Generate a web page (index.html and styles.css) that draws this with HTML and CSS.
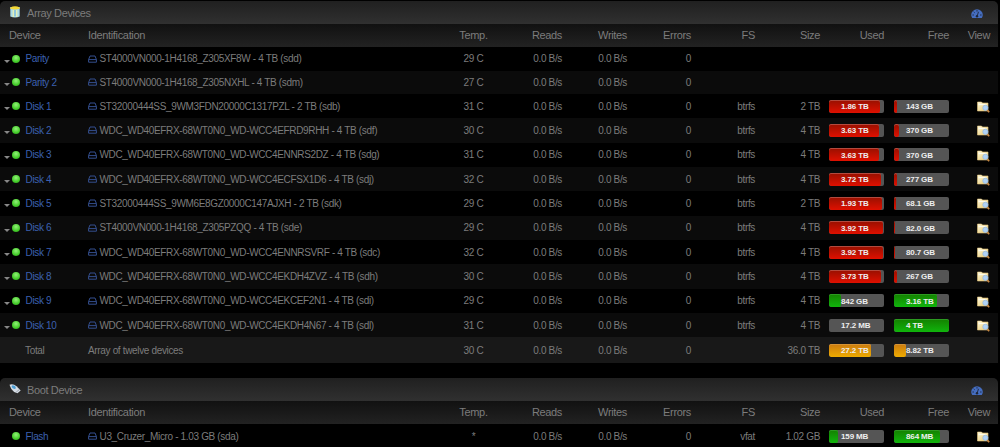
FILE: index.html
```
<!DOCTYPE html>
<html lang="en">
<head>
    <meta charset="UTF-8">
    <meta name="viewport" content="width=device-width, initial-scale=1.0">
    <title>Main</title>
    <link rel="stylesheet" href="styles.css">
</head>
<body>
    <!-- Icons -->
    <svg class="sprite" width="0" height="0">
        <linearGradient id="folder-fill" x1="0" y1="0" x2="1" y2="1">
            <stop offset="0" stop-color="#fffbe0"/>
            <stop offset="1" stop-color="#e8c567"/>
        </linearGradient>
        <symbol id="icon-drive" viewBox="0 0 9 8">
            <path d="M.6 4.500 2 1h5l1.400 3.500v2.700H.6zM.6 4.600h7.800" fill="none" stroke="currentColor"/>
        </symbol>
        <symbol id="icon-gauge" viewBox="0 0 12 9">
            <path d="M1.200 9A5.800 5.800 0 0 1 .2 6a5.800 5.800 0 0 1 11.600 0 5.800 5.800 0 0 1-1 3z" fill="#456dbf"/>
            <path d="M1.500 6h1.300M2.700 2.800l.9.900M6 1.200v1.300M9.200 6h1.300" stroke="#1d2638" stroke-width="1"/>
            <path d="M6 7.500 7.500 2.800" stroke="#1d2638" stroke-width=".9"/>
            <circle cx="6" cy="7.300" r="1.200" fill="#1d2638"/>
        </symbol>
        <symbol id="icon-folder" viewBox="0 0 13 12">
            <path d="M.5 1h4l1 1h5.500v8H.5z" fill="url(#folder-fill)" stroke="#e3c47c" stroke-width=".6"/>
            <path d="M1.500 3.600h8" stroke="#fffdf0"/>
            <path d="m10 8.800 2.200 2.500" stroke="#c8863f" stroke-width="1.700"/>
            <circle cx="8.400" cy="6.800" r="2.600" fill="#b0d2f5" stroke="#94b8e0" stroke-width=".7"/>
        </symbol>
    </svg>

    <section class="panel">
        <div class="title">
            <svg class="title-icon" viewBox="0 0 12 12">
                <path d="M1.300 1h9.400v9.500Q6 12.500 1.300 10.500z" fill="#a9d9e6"/>
                <path d="M1.300 1.500Q6-.8 10.700 1.500v1.300Q6 4 1.300 2.800z" fill="#f4d836"/>
                <path d="M4.300 4v7M7.700 4v7" stroke="#e6efb4" stroke-width="1.300"/>
                <path d="M5 5h2M5 7h2M5 9h2" stroke="#5fa3c7" stroke-width=".7"/>
            </svg>
            <span>Array Devices</span>
            <svg class="gauge"><use href="#icon-gauge"/></svg>
        </div>
        <div id="array-devices"></div>
    </section>

    <section class="panel">
        <div class="title">
            <svg class="title-icon" viewBox="0 0 12 12">
                <path d="M.5 1.700Q4 .2 7.500 3.200L11.700 7.500 8.500 10.300Q4 9 2.300 6z" fill="#d5dce4"/>
                <ellipse cx="4.700" cy="4.100" rx="2.300" ry="1.500" transform="rotate(35 4.700 4.100)" fill="#4c9ed4"/>
                <path d="m7.200 9.100 3.700-3" stroke="#8b939e" stroke-width=".8"/>
            </svg>
            <span>Boot Device</span>
            <svg class="gauge"><use href="#icon-gauge"/></svg>
        </div>
        <div id="boot-device"></div>
    </section>

    <script>
        // name, identification, temp, fs, size, used [text, percent, color], free [text, percent, color]
        const arrayDevices = [
            ["Parity", "ST4000VN000-1H4168_Z305XF8W - 4 TB (sdd)", "29 C"],
            ["Parity 2", "ST4000VN000-1H4168_Z305NXHL - 4 TB (sdm)", "27 C"],
            ["Disk 1", "ST32000444SS_9WM3FDN20000C1317PZL - 2 TB (sdb)", "31 C", "btrfs", "2 TB", ["1.86 TB", 93, "red"], ["143 GB", 6, "red"]],
            ["Disk 2", "WDC_WD40EFRX-68WT0N0_WD-WCC4EFRD9RHH - 4 TB (sdf)", "30 C", "btrfs", "4 TB", ["3.63 TB", 91, "red"], ["370 GB", 9, "red"]],
            ["Disk 3", "WDC_WD40EFRX-68WT0N0_WD-WCC4ENNRS2DZ - 4 TB (sdg)", "31 C", "btrfs", "4 TB", ["3.63 TB", 91, "red"], ["370 GB", 9, "red"]],
            ["Disk 4", "WDC_WD40EFRX-68WT0N0_WD-WCC4ECFSX1D6 - 4 TB (sdj)", "32 C", "btrfs", "4 TB", ["3.72 TB", 94, "red"], ["277 GB", 6, "red"]],
            ["Disk 5", "ST32000444SS_9WM6E8GZ0000C147AJXH - 2 TB (sdk)", "29 C", "btrfs", "2 TB", ["1.93 TB", 97, "red"], ["68.1 GB", 3, "red"]],
            ["Disk 6", "ST4000VN000-1H4168_Z305PZQQ - 4 TB (sde)", "29 C", "btrfs", "4 TB", ["3.92 TB", 98, "red"], ["82.0 GB", 2, "red"]],
            ["Disk 7", "WDC_WD40EFRX-68WT0N0_WD-WCC4ENNRSVRF - 4 TB (sdc)", "32 C", "btrfs", "4 TB", ["3.92 TB", 98, "red"], ["80.7 GB", 2, "red"]],
            ["Disk 8", "WDC_WD40EFRX-68WT0N0_WD-WCC4EKDH4ZVZ - 4 TB (sdh)", "30 C", "btrfs", "4 TB", ["3.73 TB", 94, "red"], ["267 GB", 6, "red"]],
            ["Disk 9", "WDC_WD40EFRX-68WT0N0_WD-WCC4EKCEF2N1 - 4 TB (sdi)", "29 C", "btrfs", "4 TB", ["842 GB", 21, "green"], ["3.16 TB", 79, "green"]],
            ["Disk 10", "WDC_WD40EFRX-68WT0N0_WD-WCC4EKDH4N67 - 4 TB (sdl)", "31 C", "btrfs", "4 TB", ["17.2 MB", 0, "green"], ["4 TB", 100, "green"]],
            ["Total", "Array of twelve devices", "30 C", "", "36.0 TB", ["27.2 TB", 76, "orange"], ["8.82 TB", 22, "orange"]]
        ];
        const bootDevice = [
            ["Flash", "U3_Cruzer_Micro - 1.03 GB (sda)", "*", "vfat", "1.02 GB", ["159 MB", 16, "green"], ["864 MB", 83, "green"]]
        ];

        const header = `<div class="row header">
            <span>Device</span><span>Identification</span><span class="temp">Temp.</span>
            <span class="num">Reads</span><span class="num">Writes</span><span class="num">Errors</span>
            <span class="num">FS</span><span class="num">Size</span><span class="num">Used</span>
            <span class="num">Free</span><span class="num">View</span></div>`;

        function usageBar(usage) {
            if (!usage) return "<span></span>";
            const [text, percent, color] = usage;
            return `<div class="bar"><div class="fill ${color}" style="width: ${percent}%"></div><span class="bar-text">${text}</span></div>`;
        }

        function deviceRow([name, id, temp, fs = "", size = "", used, free]) {
            const total = name === "Total";
            const kind = total ? "total" : name.startsWith("Parity") ? "parity" : "disk";
            const arrow = name === "Flash" ? "" : '<i class="arrow"></i>';
            const device = total ? `<span class="name">${name}</span>`
                : `<span class="status">${arrow}<i class="dot"></i></span><a class="name" href="#">${name}</a>`;
            const drive = total ? "" : '<svg class="drive"><use href="#icon-drive"/></svg>';
            const view = used && !total ? '<svg class="folder"><use href="#icon-folder"/></svg>' : "";

            return `<div class="row ${kind}">
                <div class="device">${device}</div>
                <div class="ident">${drive}<span>${id}</span></div>
                <span class="temp">${temp}</span>
                <span class="num">0.0 B/s</span><span class="num">0.0 B/s</span><span class="num">0</span>
                <span class="num">${fs}</span><span class="num">${size}</span>
                ${usageBar(used)}${usageBar(free)}
                <span class="num view">${view}</span></div>`;
        }

        document.getElementById("array-devices").innerHTML = header + arrayDevices.map(deviceRow).join("");
        document.getElementById("boot-device").innerHTML = header + bootDevice.map(deviceRow).join("");
    </script>
</body>
</html>
```
FILE: styles.css
```
/* General Styles */
body {
    margin: 0;
    padding-top: 1px;
    background: #000;
    color: #7c7c7c;
    font-family: "Liberation Sans", Arial, sans-serif;
    font-size: 10px;
    letter-spacing: -0.34px;
    overflow: hidden;
}

.sprite {
    display: block;
}

.panel {
    width: 998px;
    margin-bottom: 15.5px;
}

/* Title bar */
.title {
    display: flex;
    align-items: center;
    box-sizing: border-box;
    height: 23px;
    padding: 0 15px 0 9px;
    border-radius: 5px 5px 0 0;
    background: linear-gradient(#202020, #303030);
    font-size: 11px;
    letter-spacing: -0.37px;
}

.title span {
    flex: 1;
    padding-top: 1px;
}

.title-icon {
    width: 12px;
    height: 12px;
    margin-right: 6px;
    margin-bottom: 1px;
}

.gauge {
    width: 12px;
    height: 9px;
    margin-top: 2px;
}

/* Rows */
.row {
    display: grid;
    grid-template-columns: 79px 360px 51px 63px 65px 64px 64px 65px 64px 65px 41px;
    align-items: center;
    box-sizing: border-box;
    height: 24.33px;
    padding-left: 9px;
    white-space: nowrap;
}

.row:nth-child(odd) {
    background: #0b0b0b;
}

.row.parity {
    height: 23.5px;
}

.row.header {
    height: 23px;
    padding-bottom: 1px;
    background: linear-gradient(#111, #222);
    font-size: 11px;
    letter-spacing: -0.34px;
}

.row.total {
    height: 25.5px;
    background: #181818;
}

.temp {
    text-align: center;
}

.num {
    text-align: right;
}

/* Device */
.device,
.ident,
.status {
    display: flex;
    align-items: center;
}

.status {
    justify-content: flex-end;
    width: 16px;
    margin-left: -5px;
}

.arrow {
    margin-right: 2px;
    margin-top: 5px;
    border: 3px solid transparent;
    border-top-color: #888;
    border-bottom: 0;
}

.dot {
    width: 8px;
    height: 8px;
    border-radius: 50%;
    background: radial-gradient(circle at 50% 35%, #92f078, #45cc2b 60%, #249018);
}

.name {
    margin-left: 5.5px;
}

.total .name {
    margin-left: 16px;
}

a {
    color: #3c61b0;
    text-decoration: none;
}

.drive {
    width: 9px;
    height: 8px;
    margin-right: 2.5px;
    color: #344f8f;
}

/* Usage bars */
.bar {
    display: grid;
    align-items: center;
    justify-self: end;
    width: 55px;
    height: 13px;
    border-radius: 2px;
    background: #555;
    overflow: hidden;
}

.fill,
.bar-text {
    grid-area: 1 / 1;
}

.fill {
    height: 13px;
    border-radius: 2px;
}

.red {
    background: linear-gradient(#971000, #e01000);
    box-shadow: inset 0 1px #b34a3e;
}

.green {
    background: linear-gradient(#148000, #10b50c);
    box-shadow: inset 0 1px #2c9a20;
}

.orange {
    background: linear-gradient(#ca7a10, #eeab00);
    box-shadow: inset 0 1px #d49235;
}

.bar-text {
    padding-left: 12px;
    padding-top: 1px;
    color: #eee;
    font-size: 8px;
    font-weight: bold;
    letter-spacing: -0.13px;
}

.view {
    display: flex;
    justify-content: flex-end;
}

.folder {
    width: 13px;
    height: 12px;
    margin-top: 2px;
}
```
